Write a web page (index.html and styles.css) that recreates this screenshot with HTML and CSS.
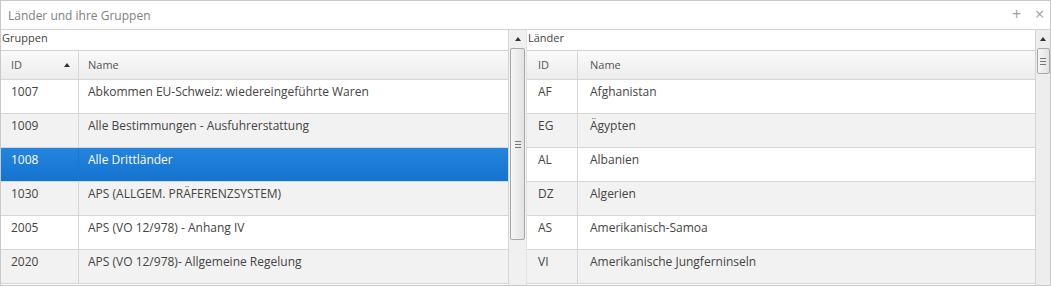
FILE: index.html
```html
<!DOCTYPE html>
<html lang="de">
<head>
    <meta charset="UTF-8">
    <title>Länder und ihre Gruppen</title>
    <link rel="stylesheet" href="styles.css">
</head>
<body>
    <div class="window">
        <div class="titlebar">
            <span class="title">Länder und ihre Gruppen</span>
            <div class="tools">
                <span class="tool">+</span>
                <span class="tool">×</span>
            </div>
        </div>

        <div class="panes">
            <div class="pane pane-left">
                <div class="pane-content">
                    <div class="pane-label">Gruppen</div>
                    <div class="grid">
                        <div class="row head">
                            <div class="cell id">ID <span class="sort"></span></div>
                            <div class="cell name">Name</div>
                        </div>
                        <div class="row">
                            <div class="cell id">1007</div>
                            <div class="cell name">Abkommen EU-Schweiz: wiedereingeführte Waren</div>
                        </div>
                        <div class="row alt">
                            <div class="cell id">1009</div>
                            <div class="cell name">Alle Bestimmungen - Ausfuhrerstattung</div>
                        </div>
                        <div class="row selected">
                            <div class="cell id">1008</div>
                            <div class="cell name">Alle Drittländer</div>
                        </div>
                        <div class="row alt">
                            <div class="cell id">1030</div>
                            <div class="cell name">APS (ALLGEM. PRÄFERENZSYSTEM)</div>
                        </div>
                        <div class="row">
                            <div class="cell id">2005</div>
                            <div class="cell name">APS (VO 12/978) - Anhang IV</div>
                        </div>
                        <div class="row alt">
                            <div class="cell id">2020</div>
                            <div class="cell name">APS (VO 12/978)- Allgemeine Regelung</div>
                        </div>
                    </div>
                </div>
                <div class="scrollbar">
                    <div class="arrow"></div>
                    <div class="thumb thumb-long"><span class="grip"></span></div>
                </div>
            </div>

            <div class="pane pane-right">
                <div class="pane-content">
                    <div class="pane-label">Länder</div>
                    <div class="grid grid-small-id">
                        <div class="row head">
                            <div class="cell id">ID</div>
                            <div class="cell name">Name</div>
                        </div>
                        <div class="row">
                            <div class="cell id">AF</div>
                            <div class="cell name">Afghanistan</div>
                        </div>
                        <div class="row alt">
                            <div class="cell id">EG</div>
                            <div class="cell name">Ägypten</div>
                        </div>
                        <div class="row">
                            <div class="cell id">AL</div>
                            <div class="cell name">Albanien</div>
                        </div>
                        <div class="row alt">
                            <div class="cell id">DZ</div>
                            <div class="cell name">Algerien</div>
                        </div>
                        <div class="row">
                            <div class="cell id">AS</div>
                            <div class="cell name">Amerikanisch-Samoa</div>
                        </div>
                        <div class="row alt">
                            <div class="cell id">VI</div>
                            <div class="cell name">Amerikanische Jungferninseln</div>
                        </div>
                    </div>
                </div>
                <div class="scrollbar">
                    <div class="arrow"></div>
                    <div class="thumb thumb-short"><span class="grip"></span></div>
                </div>
            </div>
        </div>
    </div>
</body>
</html>
```

FILE: styles.css
```css
* {
    margin: 0;
    padding: 0;
    box-sizing: border-box;
}

body {
    font-family: 'Open Sans', 'Noto Sans', sans-serif;
    background-color: #fff;
    color: #444;
}

.window {
    width: 1051px;
    height: 286px;
    border: 1px solid #c9c9c9;
    overflow: hidden;
    background: #fff;
}

.titlebar {
    height: 29px;
    border-bottom: 1px solid #d2d2d2;
    display: flex;
    align-items: center;
    justify-content: space-between;
    padding: 0 4px 0 7px;
}

.title {
    font-size: 12px;
    color: #808080;
}

.tools {
    display: flex;
    gap: 10px;
    padding-bottom: 2px;
}

.tool {
    font-size: 16px;
    color: #a0a0a0;
    width: 13px;
    text-align: center;
}

.panes {
    display: flex;
    height: 255px;
}

.pane {
    display: flex;
}

.pane-left {
    width: 525px;
}

.pane-right {
    flex: 1;
    border-left: 1px solid #e2e2e2;
}

.pane-content {
    flex: 1;
    min-width: 0;
}

.pane-label {
    height: 20px;
    font-size: 11px;
    line-height: 16px;
    padding-left: 1px;
    color: #444;
}

.row {
    display: flex;
    height: 34px;
    border-bottom: 1px solid #d6d6d6;
    font-size: 12px;
    background: #fff;
}

.row.alt {
    background: #f2f2f2;
}

.row.selected {
    background: linear-gradient(#2584dc, #1473d0);
    color: #fff;
}

.row.head {
    height: 30px;
    border-top: 1px solid #d2d2d2;
    background: linear-gradient(#fafafa, #ececec);
    font-size: 11px;
    color: #555;
}

.cell {
    display: flex;
    align-items: center;
    padding-bottom: 10px;
}

.row.head .cell {
    padding-bottom: 1px;
}

.cell.id {
    width: 78px;
    padding-left: 10px;
    border-right: 1px solid #d6d6d6;
}

.row.selected .cell.id {
    border-right-color: #1a78d2;
}

.cell.name {
    flex: 1;
    padding-left: 9px;
    white-space: nowrap;
}

.grid-small-id .cell.id {
    width: 51px;
    padding-left: 11px;
}

.grid-small-id .cell.name {
    padding-left: 12px;
}

.sort {
    width: 0;
    height: 0;
    margin-left: 42px;
    border-left: 3px solid transparent;
    border-right: 3px solid transparent;
    border-bottom: 4px solid #333;
}

.scrollbar {
    width: 18px;
    background: #f0f0f0;
    border-left: 1px solid #d4d4d4;
    display: flex;
    flex-direction: column;
    align-items: center;
}

.pane-right .scrollbar {
    width: 15px;
    background: #ededed;
}

.arrow {
    width: 0;
    height: 0;
    margin-top: 7px;
    margin-bottom: 7px;
    border-left: 3px solid transparent;
    border-right: 3px solid transparent;
    border-bottom: 4px solid #333;
}

.thumb {
    width: 15px;
    border: 1px solid #a9a9a9;
    border-radius: 2px;
    background: linear-gradient(90deg, #f6f6f6, #e2e2e2);
    display: flex;
    align-items: center;
    justify-content: center;
}

.thumb-long {
    height: 192px;
}

.thumb-short {
    width: 13px;
    height: 26px;
}

.grip {
    width: 6px;
    height: 7px;
    border-top: 1px solid #777;
    border-bottom: 1px solid #777;
}

.grip::after {
    content: "";
    display: block;
    margin-top: 2px;
    border-top: 1px solid #777;
}
```
